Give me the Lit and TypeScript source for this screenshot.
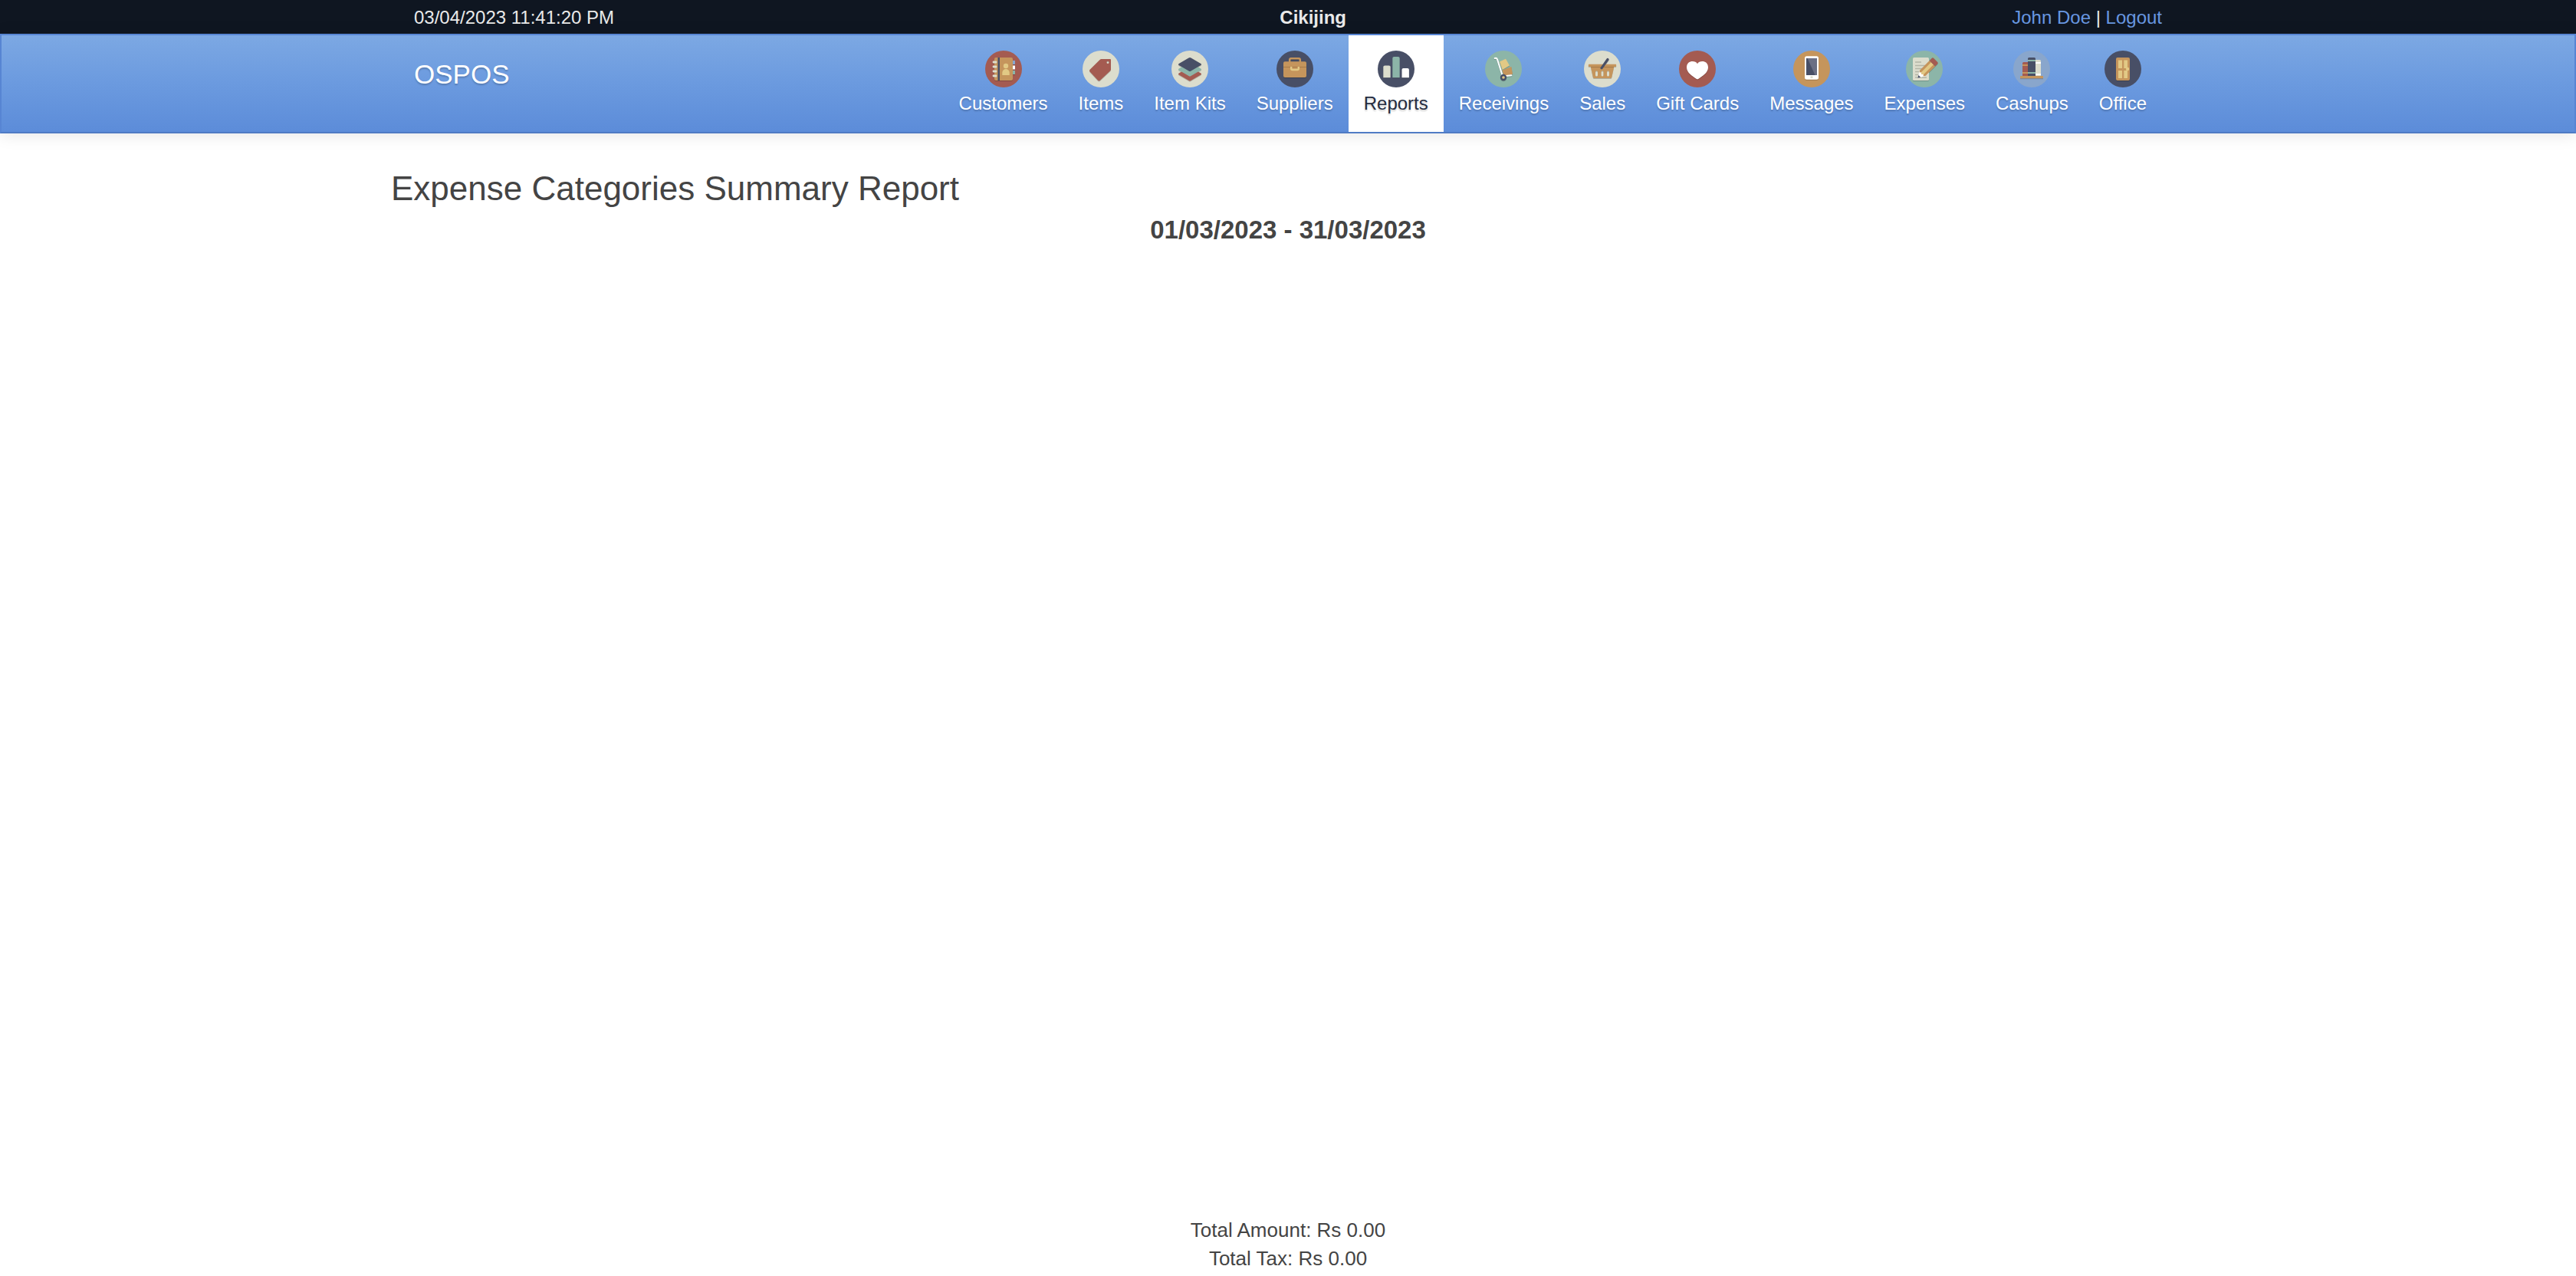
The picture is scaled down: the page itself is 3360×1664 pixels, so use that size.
import { LitElement, html, svg, css } from "lit";
import { customElement } from "lit/decorators.js";
import { classMap } from "lit/directives/class-map.js";

const NAVY = "#484f66";
const RED = "#a45b51";
const CREAM = "#dcddcd";
const GREEN = "#8cb5a8";
const TAN = "#c5955c";
const GOLD = "#e2c985";
const BLUE = "#89a6cc";
const WHITE = "#ffffff";

const modules = [
  {
    name: "Customers",
    disc: RED,
    art: svg`
      <rect x="35" y="13" width="4" height="5" fill=${BLUE}/>
      <rect x="35" y="19.5" width="4" height="5" fill=${WHITE}/>
      <rect x="35" y="26" width="4" height="5" fill=${GREEN}/>
      <rect x="12" y="9" width="24" height="30" rx="2" fill=${TAN}/>
      <rect x="16.5" y="9" width="2.5" height="30" fill=${NAVY}/>
      <g fill=${CREAM}>
        <rect x="9.7" y="13.5" width="5.6" height="3" rx="1"/>
        <rect x="9.7" y="19.5" width="5.6" height="3" rx="1"/>
        <rect x="9.7" y="25.5" width="5.6" height="3" rx="1"/>
        <rect x="9.7" y="31.5" width="5.6" height="3" rx="1"/>
      </g>
      <circle cx="27" cy="20" r="3.2" fill=${GOLD}/>
      <path d="M22.3 32v-3.2a4.7 4.7 0 0 1 9.4 0V32z" fill=${GOLD}/>`,
  },
  {
    name: "Items",
    disc: CREAM,
    art: svg`
      <path fill-rule="evenodd" fill=${RED} d="M24.5 11H36a1 1 0 0 1 1 1v12.500q0 1-1 2L23 38.800q-1.500 1.300-3 0L9.600 27.500q-1.200-1.400 0-2.800L22.500 12q1-1 2-1zM33 13.700a1.600 1.600 0 1 0 0 3.200a1.600 1.600 0 0 0 0-3.200z"/>`,
  },
  {
    name: "Item Kits",
    disc: CREAM,
    art: svg`
      <path fill=${RED} d="M9.700 29.500 22.500 22q1.500-1 3 0l12.800 7.500q1.400 1 0 2L25.500 39q-1.500 1-3 0L9.700 31.500q-1.400-1 0-2z"/>
      <path fill=${GREEN} d="M9.700 23.500 22.500 16q1.500-1 3 0l12.800 7.500q1.400 1 0 2L25.500 33q-1.500 1-3 0L9.700 25.500q-1.400-1 0-2z"/>
      <path fill=${NAVY} d="M9.700 17 22.500 9.500q1.500-1 3 0L38.300 17q1.400 1 0 2l-12.800 7.500q-1.500 1-3 0L9.700 19q-1.400-1 0-2z"/>`,
  },
  {
    name: "Suppliers",
    disc: NAVY,
    art: svg`
      <path d="M17.200 15v-3q0-1.800 1.800-1.800h10q1.800 0 1.800 1.800v3" fill="none" stroke=${TAN} stroke-width="2.500"/>
      <rect x="9" y="14.300" width="30" height="20.700" rx="2" fill=${TAN}/>
      <rect x="9" y="21" width="30" height="1" fill="#a77a48"/>
      <path d="M19.200 21v2.500q0 1.500 1.500 1.500h6.600q1.500 0 1.500-1.500V21" fill="none" stroke=${GOLD} stroke-width="2.400"/>`,
  },
  {
    name: "Reports",
    disc: NAVY,
    active: true,
    art: svg`
      <path d="M7.300 35.300V21.500q0-2 2-2h5.400q2 0 2 2v13.800z" fill=${CREAM}/>
      <path d="M19.300 35.300V10q0-2 2-2h5.400q2 0 2 2v25.300z" fill=${GREEN}/>
      <path d="M31.500 35.300V25q0-2 2-2h5.400q2 0 2 2v10.300z" fill=${WHITE}/>`,
  },
  {
    name: "Receivings",
    disc: GREEN,
    art: svg`
      <path d="M19 14.500 27 10.700 32 19.500 22.700 25z" fill=${GOLD}/>
      <path d="M22.300 25.500 34.300 21 36 30.500 25 34z" fill=${TAN}/>
      <path d="M12.700 10q2.500-.8 3.300 1.500L23 33.500l11.300-1.200" fill="none" stroke=${WHITE} stroke-width="2" stroke-linecap="round"/>
      <circle cx="24" cy="35" r="4.200" fill=${NAVY}/>
      <circle cx="24" cy="35" r="1.800" fill=${GOLD}/>`,
  },
  {
    name: "Sales",
    disc: CREAM,
    art: svg`
      <path fill=${TAN} fill-rule="evenodd" d="M6.500 17.800h35q.6 0 .6.600v2q0 .7-.6.700h-2.200L36.200 35q-.3 1-1.300 1H13.200q-1 0-1.300-1L8.800 21.100H6.500q-.6 0-.6-.7v-2q0-.6.600-.6zM16.500 26.300q-1.500 0-1.500 1.500v4.200q0 1.500 1.500 1.500t1.500-1.500v-4.200q0-1.500-1.500-1.500zM24 26.300q-1.500 0-1.500 1.500v4.200q0 1.500 1.500 1.500t1.500-1.500v-4.200q0-1.500-1.500-1.500zM31.500 26.300q-1.500 0-1.500 1.500v4.200q0 1.500 1.500 1.500t1.500-1.500v-4.200q0-1.500-1.500-1.500z"/>
      <rect x="9" y="21" width="30" height="1" fill="#a77a48"/>
      <path d="M31 11.500 23 22.800" stroke=${NAVY} stroke-width="3.200" stroke-linecap="round"/>`,
  },
  {
    name: "Gift Cards",
    disc: RED,
    art: svg`
      <path fill=${WHITE} d="M24 17.300C26.500 12.500 38 12.300 38 22c0 7-8 11.500-12.500 14.800q-1.500 1-3 0C18 33.500 10 29 10 22c0-9.700 11.500-9.500 14-4.700z"/>`,
  },
  {
    name: "Messages",
    disc: TAN,
    art: svg`
      <rect x="15" y="7.300" width="18" height="30.500" rx="2.500" fill=${WHITE}/>
      <rect x="17" y="10" width="14" height="22" fill=${NAVY}/>
      <path d="M18.500 10H31v22h-2.500z" fill="#6a6f84"/>
      <rect x="22.300" y="33.300" width="3.400" height="2.600" rx="1.200" fill=${CREAM}/>`,
  },
  {
    name: "Expenses",
    disc: GREEN,
    art: svg`
      <rect x="9" y="9" width="21" height="30" rx="1.500" fill=${CREAM}/>
      <path d="M12 15h8M12 19.500h15M12 23.500h15M12 27.500h15M12 31.500h15M12 35h15" stroke="#b3b5a6" stroke-width="1.300"/>
      <g transform="translate(15.300 35.800) rotate(-45)">
        <path d="M0 0 9-5.200V5.200z" fill=${WHITE}/>
        <path d="M0 0 3.500-2v4z" fill=${NAVY}/>
        <path d="M9-5.200h18V5.200H9L7 3.400 9 1.700 7 0 9-1.700 7-3.400z" fill=${TAN}/>
        <path d="M9-2.200h18v4.400H9L7 0z" fill=${GOLD}/>
        <path d="M27-5.200h4.500q1.500 0 1.500 1.500v7.400q0 1.500-1.500 1.500H27z" fill=${RED}/>
      </g>`,
  },
  {
    name: "Cashups",
    disc: BLUE,
    art: svg`
      <path d="M12 33V16.500q0-1.500 1.500-1.500H19v18z" fill=${RED}/>
      <path d="M12 18h7v2h-7zM12 28h7v2h-7z" fill=${TAN}/>
      <path d="M29 33V12h5.500q1.500 0 1.500 1.500V33z" fill=${CREAM}/>
      <path d="M29 15h7v2h-7zM29 30h7v2h-7z" fill=${WHITE}/>
      <path d="M19 33V10.500Q19 9 20.500 9h7Q29 9 29 10.500V33z" fill=${NAVY}/>
      <path d="M19 12h10v2H19zM19 28h10v2H19z" fill=${GREEN}/>
      <rect x="9" y="33" width="30" height="3.200" rx=".5" fill=${TAN}/>`,
  },
  {
    name: "Office",
    disc: NAVY,
    art: svg`
      <rect x="15" y="9" width="18" height="30" rx="2" fill=${TAN}/>
      <path d="M18 12.500h5V23h-5zM25.300 12.500h4.700V23h-4.700zM18 26h5v10h-5zM25.300 26h4.700v10h-4.700z" fill=${GOLD}/>
      <circle cx="30" cy="24" r="2.200" fill=${GOLD}/>`,
  },
];

@customElement("app-root")
export class AppRoot extends LitElement {
  static styles = css`
    :host {
      display: flex;
      flex-direction: column;
      box-sizing: border-box;
      min-height: 100vh;
      background: #ffffff;
      color: #444444;
      font: 26px/37px "Liberation Sans", Arial, Helvetica, sans-serif;
    }
    a {
      text-decoration: none;
    }
    .container {
      box-sizing: border-box;
      width: 100%;
      max-width: 2340px;
      margin: 0 auto;
      padding: 0 30px;
    }
    .topbar {
      padding-top: 2px;
      background: #0f1621;
      color: #e9e9e9;
      font-size: 24px;
      line-height: 42px;
    }
    .topbar-row {
      display: flex;
      justify-content: space-between;
    }
    .account a {
      color: #6897e0;
    }
    .navbar {
      border: 2px solid;
      border-color: #5785d3 #5785d3 #4f7bc4;
      background: linear-gradient(#7ca8e3, #6b9adf 50%, #5c8cd9);
      box-shadow: 0 2px 20px rgba(0, 0, 0, 0.1);
    }
    .navbar-row {
      display: flex;
      justify-content: space-between;
      align-items: flex-start;
    }
    .brand {
      padding: 30px 0;
      font-size: 35px;
      line-height: 42px;
      color: #ffffff;
      text-shadow: 0 2px 2px rgba(0, 0, 0, 0.2);
    }
    .menu {
      display: flex;
      margin: 0;
      padding: 0;
      list-style: none;
    }
    .item {
      display: flex;
      flex-direction: column;
      align-items: center;
      gap: 4px;
      padding: 20px;
      color: #ffffff;
      font-size: 24px;
      line-height: 34px;
      white-space: nowrap;
      text-shadow: 0 2px 2px rgba(0, 0, 0, 0.2);
    }
    .item.active {
      background: #ffffff;
      color: #242c40;
    }
    .icon {
      display: block;
      width: 48px;
      height: 48px;
    }
    .art {
      filter: drop-shadow(0 1px 0 rgba(0, 0, 0, 0.2));
    }
    .report {
      display: flex;
      flex: 1;
      flex-direction: column;
      box-sizing: border-box;
      width: 100%;
      max-width: 2340px;
      margin: 0 auto;
      padding: 46px 0 4px;
    }
    .title {
      margin: 0;
      font-size: 44px;
      font-weight: 400;
      line-height: 52px;
    }
    .range {
      margin: 4px 0 0;
      font-size: 33px;
      font-weight: 700;
      line-height: 48px;
      text-align: center;
    }
    .totals {
      margin-top: auto;
      text-align: center;
    }
  `;

  render() {
    return html`
      <header>
        <div class="topbar">
          <div class="container topbar-row">
            <time>03/04/2023 11:41:20 PM</time>
            <strong>Cikijing</strong>
            <div class="account">
              <a href="#profile">John Doe</a> | <a href="#logout">Logout</a>
            </div>
          </div>
        </div>
        <nav class="navbar">
          <div class="container navbar-row">
            <a class="brand" href="#home">OSPOS</a>
            <ul class="menu">
              ${modules.map(
                (m) => html`<li>
                  <a class=${classMap({ item: true, active: !!m.active })} href="#${m.name}">
                    <svg class="icon" viewBox="0 0 48 48" aria-hidden="true">
                      <circle cx="24" cy="24" r="24" fill=${m.disc}></circle>
                      <g class="art">${m.art}</g>
                    </svg>
                    <span>${m.name}</span>
                  </a>
                </li>`
              )}
            </ul>
          </div>
        </nav>
      </header>
      <main class="report">
        <h1 class="title">Expense Categories Summary Report</h1>
        <h2 class="range">01/03/2023 - 31/03/2023</h2>
        <div class="totals">
          <div>Total Amount: Rs 0.00</div>
          <div>Total Tax: Rs 0.00</div>
        </div>
      </main>
    `;
  }
}
